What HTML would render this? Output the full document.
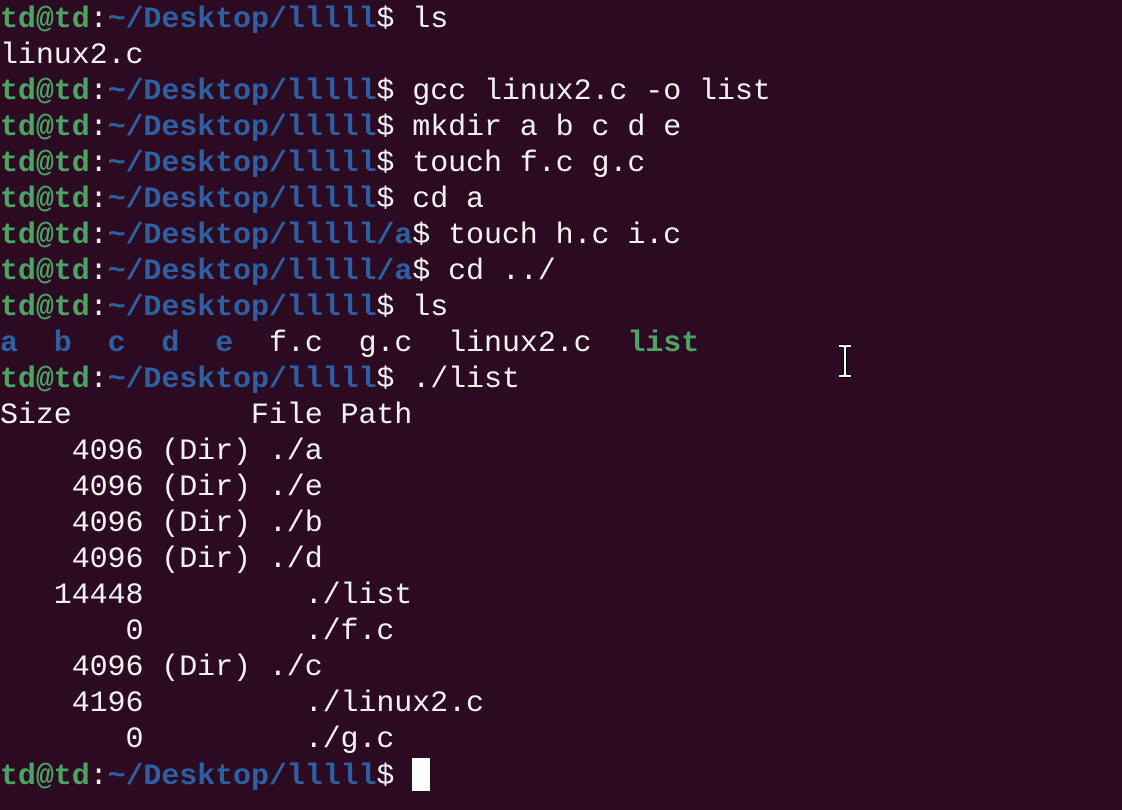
<!DOCTYPE html>
<html><head><meta charset="utf-8"><style>
html,body{margin:0;padding:0;background:#2c0a22;width:1122px;height:810px;overflow:hidden}
pre{margin:0;position:absolute;left:0;top:2px;font-family:"Liberation Mono",monospace;font-size:30px;line-height:36px;color:#f2f2f2;letter-spacing:-0.08px}
.g{color:#4aa564;font-weight:bold}.b{color:#2d5fa3;font-weight:bold}
.cur{display:inline-block;width:18px;height:33px;background:#fff;vertical-align:-7px}
.ib{position:absolute;left:837px;top:344px;width:16px;height:34px}
</style></head><body>
<pre><span class="g">td@td</span>:<span class="b">~/Desktop/lllll</span>$ ls
linux2.c
<span class="g">td@td</span>:<span class="b">~/Desktop/lllll</span>$ gcc linux2.c -o list
<span class="g">td@td</span>:<span class="b">~/Desktop/lllll</span>$ mkdir a b c d e
<span class="g">td@td</span>:<span class="b">~/Desktop/lllll</span>$ touch f.c g.c
<span class="g">td@td</span>:<span class="b">~/Desktop/lllll</span>$ cd a
<span class="g">td@td</span>:<span class="b">~/Desktop/lllll/a</span>$ touch h.c i.c
<span class="g">td@td</span>:<span class="b">~/Desktop/lllll/a</span>$ cd ../
<span class="g">td@td</span>:<span class="b">~/Desktop/lllll</span>$ ls
<span class="b">a</span>  <span class="b">b</span>  <span class="b">c</span>  <span class="b">d</span>  <span class="b">e</span>  f.c  g.c  linux2.c  <span class="g">list</span>
<span class="g">td@td</span>:<span class="b">~/Desktop/lllll</span>$ ./list
Size          File Path
    4096 (Dir) ./a
    4096 (Dir) ./e
    4096 (Dir) ./b
    4096 (Dir) ./d
   14448         ./list
       0         ./f.c
    4096 (Dir) ./c
    4196         ./linux2.c
       0         ./g.c
<span class="g">td@td</span>:<span class="b">~/Desktop/lllll</span>$ <span class="cur"></span></pre>
<svg class="ib" viewBox="0 0 16 34"><path d="M2 2h5l1 2 1-2h5M8 4v26M2 32h5l1-2 1 2h5" stroke="#000" stroke-width="4" fill="none"/><path d="M2 2h5l1 2 1-2h5M8 4v26M2 32h5l1-2 1 2h5" stroke="#fff" stroke-width="2" fill="none"/></svg>
</body></html>
